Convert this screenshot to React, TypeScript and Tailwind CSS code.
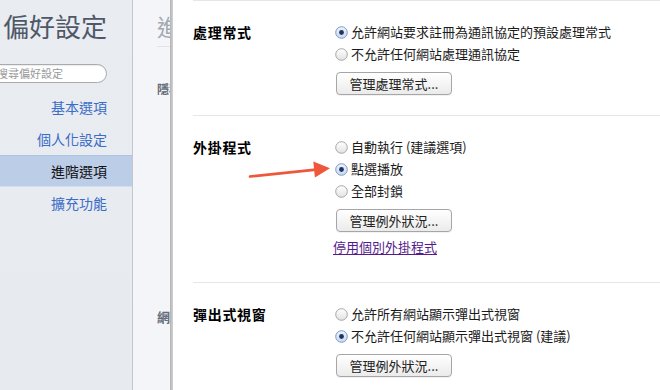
import React from "react";

function Radio({ checked }: { checked?: boolean }) {
  return (
    <svg width="13" height="13" viewBox="0 0 13 13" className="shrink-0">
      <defs>
        <linearGradient id="roff" x1="0" y1="0" x2="0" y2="1">
          <stop offset="0" stopColor="#ffffff" />
          <stop offset="1" stopColor="#e2e2e2" />
        </linearGradient>
        <linearGradient id="ron" x1="0" y1="0" x2="0" y2="1">
          <stop offset="0" stopColor="#eef3fb" />
          <stop offset="1" stopColor="#c9d9f1" />
        </linearGradient>
      </defs>
      <circle
        cx="6.5"
        cy="6.5"
        r="5.8"
        fill={checked ? "url(#ron)" : "url(#roff)"}
        stroke={checked ? "#7390c0" : "#9d9d9d"}
        strokeWidth="0.9"
      />
      {checked && <circle cx="6.5" cy="6.5" r="2.4" fill="#1f355e" />}
    </svg>
  );
}

function Row({ checked, children }: { checked?: boolean; children: React.ReactNode }) {
  return (
    <div className="flex h-[22px] items-center gap-[3px] text-[13px] text-[#1b1b1b] whitespace-nowrap">
      <Radio checked={checked} />
      <span>{children}</span>
    </div>
  );
}

function Btn({ children, className = "" }: { children: React.ReactNode; className?: string }) {
  return (
    <div
      className={
        "ml-px flex h-[23px] w-[116px] items-center justify-center rounded-[4px] border border-[#a6a6a6] bg-gradient-to-b from-white to-[#ebebeb] text-[13px] text-[#222] shadow-[0_1px_0_rgba(0,0,0,0.05)] " +
        className
      }
    >
      {children}
    </div>
  );
}

function Section({
  title,
  children,
  className = "",
}: {
  title: string;
  children: React.ReactNode;
  className?: string;
}) {
  return (
    <div className={"flex border-t border-[#e6e6e6] pt-[20px] " + className}>
      <div className="flex h-[22px] w-[142px] shrink-0 items-center text-[14px] font-bold tracking-[0.7px] text-black">
        {title}
      </div>
      <div className="flex flex-col">{children}</div>
    </div>
  );
}

export default function App() {
  return (
    <div className="relative flex h-[390px] w-[660px] overflow-hidden font-['Noto_Sans_CJK_TC','Noto_Sans',sans-serif]">
      {/* Sidebar */}
      <div className="flex w-[133px] shrink-0 flex-col border-r border-[#c4c8ce] bg-gradient-to-b from-[#e9ecf0] to-[#e7eaee]">
        <div className="mr-[25px] pt-[11px] text-right text-[26px] leading-[30px] text-[#4f5868] whitespace-nowrap">
          偏好設定
        </div>
        <div className="ml-[-22px] mr-[25px] mt-[23px] flex h-[19px] items-center rounded-full border border-[#a8abb0] bg-white pl-[18px] text-[11px] text-[#9a9a9a] whitespace-nowrap shadow-[inset_0_1px_1px_rgba(0,0,0,0.08)]">
          搜尋偏好設定
        </div>
        <div className="mt-[8px] flex flex-col text-[14px]">
          <div className="flex h-[32px] items-center justify-end pr-[25px] text-[#3a6cc8]">基本選項</div>
          <div className="flex h-[32px] items-center justify-end pr-[25px] text-[#3a6cc8]">個人化設定</div>
          <div className="flex h-[32px] items-center justify-end border-t border-b border-t-[#aec2e2] border-b-[#d4def0] bg-[#bccde8] pr-[25px] text-[#111]">
            進階選項
          </div>
          <div className="flex h-[32px] items-center justify-end pr-[25px] text-[#3a6cc8]">擴充功能</div>
        </div>
      </div>

      {/* Underlying page (partially visible) */}
      <div className="w-[37px] shrink-0 overflow-hidden bg-[#f3f5f8]">
        <div className="w-[300px] pl-[24px]">
          <div className="pt-[12px] text-[23px] leading-[28px] text-[#a2a8b2]">進階選項</div>
          <div className="mt-[6px] h-px bg-[#e1e3e7]" />
          <div className="mt-[34px] text-[12px] font-bold leading-[16px] text-[#646b78]">隱私權</div>
          <div className="mt-[212px] text-[13px] font-bold leading-[16px] text-[#646b78]">網頁內容</div>
        </div>
      </div>

      {/* Overlay edge */}
      <div className="w-[3px] shrink-0 bg-gradient-to-r from-[#b2b2b2] to-[#d2d2d2]" />

      {/* Overlay panel */}
      <div className="flex flex-1 flex-col bg-white pl-[20px]">
        <Section title="處理常式" className="pb-[20px]">
          <Row checked>允許網站要求註冊為通訊協定的預設處理常式</Row>
          <Row>不允許任何網站處理通訊協定</Row>
          <Btn className="mt-[7px]">管理處理常式...</Btn>
        </Section>
        <Section title="外掛程式" className="pb-[24px]">
          <Row>自動執行 (建議選項)</Row>
          <Row checked>點選播放</Row>
          <Row>全部封鎖</Row>
          <Btn className="mt-[7px]">管理例外狀況...</Btn>
          <div className="ml-[-2px] mt-[4px] flex h-[22px] items-center text-[13px] text-[#551a8b] underline underline-offset-2 whitespace-nowrap">
            停用個別外掛程式
          </div>
        </Section>
        <Section title="彈出式視窗">
          <Row>允許所有網站顯示彈出式視窗</Row>
          <Row checked>不允許任何網站顯示彈出式視窗 (建議)</Row>
          <Btn className="mt-[7px]">管理例外狀況...</Btn>
        </Section>
      </div>

      {/* Annotation arrow */}
      <svg
        className="pointer-events-none absolute left-0 top-0"
        width="660"
        height="390"
        viewBox="0 0 660 390"
      >
        <line x1="250" y1="176.5" x2="316" y2="169.6" stroke="#ee573b" strokeWidth="2.6" strokeLinecap="round" />
        <polygon points="330,168.2 313.3,161.4 314.9,177.6" fill="#ee573b" />
      </svg>
    </div>
  );
}
